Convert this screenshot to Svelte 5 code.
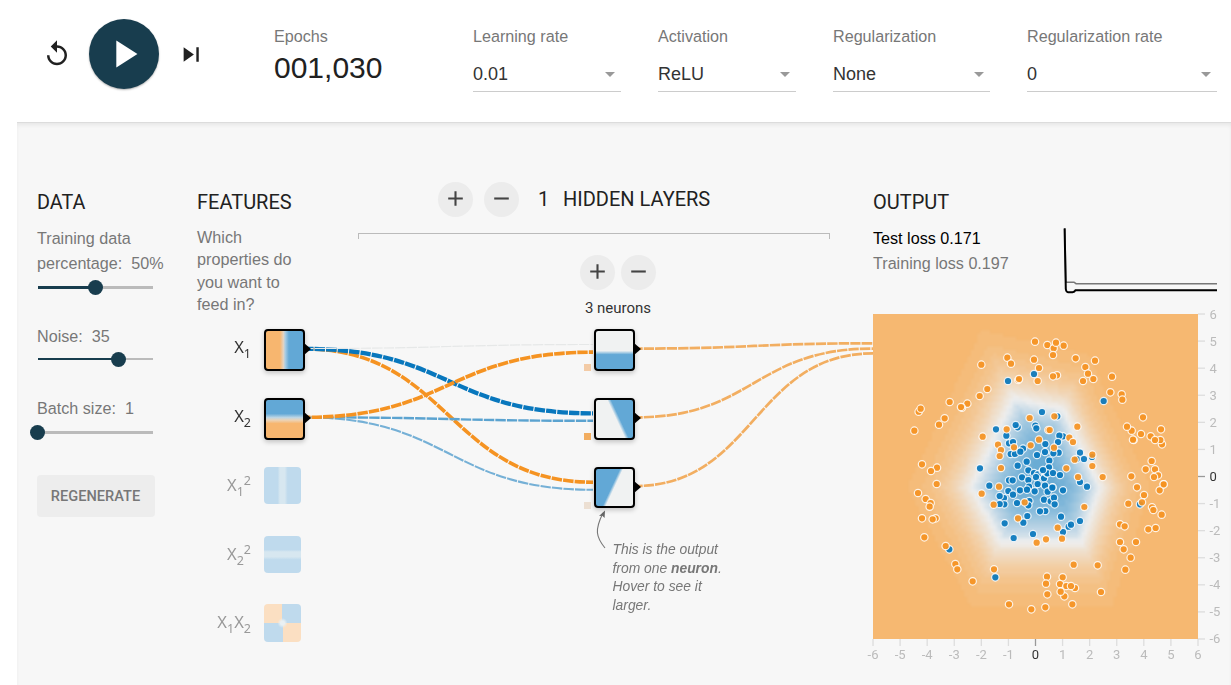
<script>
  const selects = [
    { label: 'Learning rate', value: '0.01', width: 148 },
    { label: 'Activation', value: 'ReLU', width: 138 },
    { label: 'Regularization', value: 'None', width: 157 },
    { label: 'Regularization rate', value: '0', width: 190 }
  ];

  const features = [
    { base: 'X', sub: '1', sup: '', kind: 'x1', top: 329, on: true },
    { base: 'X', sub: '2', sup: '', kind: 'x2', top: 398, on: true },
    { base: 'X', sub: '1', sup: '2', kind: 'x1sq', top: 467, on: false },
    { base: 'X', sub: '2', sup: '2', kind: 'x2sq', top: 536, on: false },
    { base: 'X', sub: '1', second: '2', kind: 'x1x2', top: 604, on: false }
  ];

  const neurons = [
    { kind: 'n1', top: 329, bias: 'rgba(240,160,85,.5)' },
    { kind: 'n2', top: 398, bias: '#f2ad60' },
    { kind: 'n3', top: 467, bias: '#ecdfd2' }
  ];

  const curve = (x0, y0, x1, y1) => {
    const m = (x0 + x1) / 2;
    return `M${x0},${y0}C${m},${y0} ${m},${y1} ${x1},${y1}`;
  };

  const links = [
    { d: curve(305, 349, 593, 482.2), color: '#f59322', w: 3.6, off: 2 },
    { d: curve(305, 348.8, 593, 413.4), color: '#0877bd', w: 4.3, off: 2 },
    { d: curve(305, 348.5, 593, 344.5), color: '#e6e8e8', w: 1.2, off: 2 },
    { d: curve(305, 417.3, 593, 489.8), color: '#75b0d6', w: 2.1, off: 5 },
    { d: curve(305, 417.3, 593, 420.8), color: '#5ba3d0', w: 2.4, off: 5 },
    { d: curve(305, 417.3, 593, 352.2), color: '#f59322', w: 3.7, off: 5 },
    { d: curve(635, 348.6, 873, 343.3), color: '#f2ae61', w: 2.7, off: 3 },
    { d: curve(635, 417.4, 873, 348.6), color: '#f2ae61', w: 2.7, off: 3 },
    { d: curve(635, 486, 873, 353.4), color: '#f2ae61', w: 2.7, off: 3 }
  ];

  // Sample groups in thirds of a pixel, each with its own offset inside the plot.
  const groups = [
    {
      dx: -24, dy: -27,
      blue: [[429,228],[507,207],[531,321],[393,373],[458,367],[452,360],[511,362],[514,370],[424,392],[432,415],[444,411],[541,417],[474,431],[437,447],[450,447],[466,440],[540,441],[516,450],[485,470],[458,482],[490,496],[345,490],[373,542],[471,517],[432,526],[443,526],[490,525],[507,504],[519,508],[513,516],[533,498],[537,520],[545,505],[518,537],[540,542],[492,545]],
      orange: [[510,110],[427,158],[438,176],[507,164],[522,189],[518,228],[349,179],[460,225],[462,222],[367,252],[344,273],[254,291],[307,296],[291,308],[288,306],[161,320],[167,311],[239,340],[222,359],[148,377],[353,395],[171,478],[216,488],[198,498],[215,537],[494,339],[425,373],[399,419],[408,435],[404,453],[408,489],[447,427],[497,421],[522,404],[402,545],[550,375]]
    },
    {
      dx: 501, dy: -27,
      blue: [[191,288],[52,334],[69,394],[58,392],[54,411],[56,443],[40,445],[120,443],[110,462],[132,462],[156,456],[28,467],[27,487],[22,505],[39,504],[60,510],[9,495],[120,531],[141,545],[38,547]],
      orange: [[22,120],[41,130],[48,113],[71,122],[39,150],[107,160],[165,167],[136,186],[144,206],[129,228],[160,222],[216,215],[51,211],[39,214],[211,262],[245,268],[247,284],[309,337],[275,377],[261,365],[303,387],[281,405],[279,404],[332,394],[366,418],[361,405],[345,405],[363,373],[335,468],[317,493],[345,493],[354,511],[342,516],[274,514],[188,516],[371,538],[291,547],[112,365],[29,375],[43,334],[42,428],[88,398],[99,411],[157,449],[104,464],[157,483],[79,490],[114,516]]
    },
    {
      dx: -24, dy: 498,
      blue: [[253,208],[391,292],[446,174],[504,162],[419,130],[475,128],[487,108],[417,54],[404,48],[418,73],[404,72],[430,33],[444,44],[456,69],[465,31],[486,29],[493,63],[490,76],[509,34],[548,35],[562,23],[537,59],[557,64],[567,53],[569,73],[594,31],[541,93],[525,94],[588,110],[645,123],[611,140],[618,134],[594,156],[825,73]],
      orange: [[159,39],[182,57],[197,69],[194,80],[171,115],[212,115],[203,118],[178,172],[242,198],[271,252],[277,268],[323,304],[387,268],[432,373],[499,388],[541,382],[546,290],[543,311],[547,343],[593,292],[585,312],[604,318],[630,324],[618,318],[598,349],[587,335],[622,373],[626,254],[698,256],[708,336],[781,269],[797,233],[776,208],[765,186],[813,186],[765,133],[779,139],[850,148],[872,144],[890,104],[861,82],[865,90],[837,45],[884,31],[896,13],[831,67],[790,71],[658,81],[350,41],[386,74],[479,67],[459,115],[578,143],[591,176],[543,178],[515,188]]
    }
  ];
  const place = (key) => groups.flatMap((g) => g[key].map(([x, y]) => [(x + g.dx) / 3, (y + g.dy) / 3]));
  const bluePoints = place('blue');
  const orangePoints = place('orange');

  const ticks = Array.from({ length: 13 }, (_, i) => i - 6);

  let heat;
  const relu = (v) => Math.max(0, v);
  const output = (x, y) =>
    Math.tanh(
      1.44 -
        0.79 * (relu(-0.9 * y - 0.35) + 1.12 * relu(x + 0.475 * y - 0.55) + 0.9 * relu(-x + 0.467 * y - 0.15))
    );

  $effect(() => {
    const ctx = heat.getContext('2d');
    const img = ctx.createImageData(100, 100);
    const neg = [245, 147, 34], mid = [232, 234, 235], pos = [8, 119, 189];
    for (let j = 0; j < 100; j++) {
      for (let i = 0; i < 100; i++) {
        let v = output(-6 + (12 * (i + 0.5)) / 100, 6 - (12 * (j + 0.5)) / 100);
        v = -1 + (2 * Math.min(29, Math.floor(((v + 1) / 2) * 30))) / 29;
        const end = v < 0 ? neg : pos;
        const t = Math.abs(v);
        const k = 4 * (j * 100 + i);
        for (let c = 0; c < 3; c++) img.data[k + c] = mid[c] + (end[c] - mid[c]) * t;
        img.data[k + 3] = 160;
      }
    }
    ctx.putImageData(img, 0, 0);
  });
</script>

{#snippet plus()}
  <svg viewBox="0 0 24 24" width="25" height="25"><path d="M19 13h-6v6h-2v-6H5v-2h6V5h2v6h6z" fill="#444" /></svg>
{/snippet}
{#snippet minus()}
  <svg viewBox="0 0 24 24" width="25" height="25"><path d="M19 13H5v-2h14z" fill="#444" /></svg>
{/snippet}

<div class="page">
  <header>
    <div class="controls">
      <button class="icon" aria-label="Reset">
        <svg viewBox="0 0 24 24" width="30" height="30"><path d="M12 5V1L7 6l5 5V7c3.31 0 6 2.69 6 6s-2.69 6-6 6-6-2.69-6-6H4c0 4.42 3.58 8 8 8s8-3.58 8-8-3.58-8-8-8z" fill="#212121" /></svg>
      </button>
      <button class="play" aria-label="Play">
        <svg viewBox="0 0 24 24" width="46" height="46"><path d="M8 5v14l11-7z" fill="#fff" /></svg>
      </button>
      <button class="icon step" aria-label="Step">
        <svg viewBox="0 0 24 24" width="29" height="29"><path d="M5.5 18l8.5-6-8.5-6v12zM16 6v12h2V6h-2z" fill="#212121" /></svg>
      </button>
    </div>
    <div class="epochs">
      <span class="label">Epochs</span>
      <span class="count">001,030</span>
    </div>
    <div class="selects">
      {#each selects as s}
        <div class="field" style="width: {s.width}px">
          <span class="label">{s.label}</span>
          <div class="value"><span>{s.value}</span><i></i></div>
        </div>
      {/each}
    </div>
  </header>

  <main>
    <section class="data">
      <h2>DATA</h2>
      <p class="cap">Training data<br />percentage:&nbsp; 50%</p>
      <div class="slider thick"><b style="width: 58px"></b><i></i></div>
      <p class="cap noise">Noise:&nbsp; 35</p>
      <div class="slider"><b style="width: 81px"></b><i></i></div>
      <p class="cap batch">Batch size:&nbsp; 1</p>
      <div class="slider thick"><b style="width: 0px"></b><i></i></div>
      <button class="regen">REGENERATE</button>
    </section>

    <section class="features">
      <h2>FEATURES</h2>
      <p>Which properties do you want to feed in?</p>
    </section>

    <section class="hidden">
      <div class="layers">
        <button class="round">{@render plus()}</button>
        <button class="round">{@render minus()}</button>
        <span class="n">1</span>
        <h2>HIDDEN LAYERS</h2>
      </div>
      <div class="bracket"></div>
      <div class="neuron-controls">
        <button class="round">{@render plus()}</button>
        <button class="round">{@render minus()}</button>
      </div>
      <div class="neuron-count">3 neurons</div>
    </section>

    <section class="output">
      <div class="summary">
        <div>
          <h2>OUTPUT</h2>
          <p class="test">Test loss 0.171</p>
          <p class="train">Training loss 0.197</p>
        </div>
        <svg class="chart" width="155" height="70" viewBox="0 0 155 70" fill="none">
          <path d="M2.8 3L3.8 56L4.5 57.2H12L14 58.7H155" stroke="#777" stroke-width="1.6" />
          <path d="M2.6 3.5L3.8 64Q4.2 67.2 6 67.2H10.5Q12.5 67 13.5 65.2H155" stroke="#000" stroke-width="2" />
        </svg>
      </div>
      <div class="plot">
        <canvas bind:this={heat} width="100" height="100"></canvas>
        <svg width="358" height="372" viewBox="0 0 358 372">
          {#each ticks as t}
            <line x1={162.5 + t * 27.08} x2={162.5 + t * 27.08} y1="325" y2="332" class:zero={t === 0} />
            <line x1="325" x2="332" y1={162.5 - t * 27.08} y2={162.5 - t * 27.08} class:zero={t === 0} />
            <text x={162.5 + t * 27.08} y="345" text-anchor="middle" class:zero={t === 0}>{t}</text>
            <text x="336.5" y={167 - t * 27.08} class:zero={t === 0}>{t}</text>
          {/each}
          {#each bluePoints as [x, y]}
            <circle cx={x} cy={y} r="3.7" fill="#0877bd" />
          {/each}
          {#each orangePoints as [x, y]}
            <circle cx={x} cy={y} r="3.7" fill="#f59322" />
          {/each}
        </svg>
      </div>
    </section>

    <div class="network">
      <svg class="links" width="1231" height="685" viewBox="0 0 1231 685" fill="none">
        {#each links as l}
          <path d={l.d} stroke={l.color} stroke-width={l.w} stroke-dasharray="10.4 1.1" stroke-dashoffset={l.off} />
        {/each}
        <path d="M605 548C596 537 594.5 530 603 513" stroke="#777" stroke-width="1.1" />
        <path d="M605 510.5L599 516L602.3 515.8L604.6 518Z" fill="#666" />
      </svg>
      {#each features as f}
        <div class="name" class:off={!f.on} style="top: {f.top - 1}px">
          {f.base}<sub>{f.sub}</sub>{#if f.second}{f.base}<sub>{f.second}</sub>{/if}{#if f.sup}<sup>{f.sup}</sup>{/if}
        </div>
        <div class="node feature {f.kind}" class:off={!f.on} style="top: {f.top}px"></div>
        {#if f.on}<div class="port" style="left: 304px; top: {f.top + 14}px"></div>{/if}
      {/each}
      {#each neurons as n}
        <div class="node neuron {n.kind}" style="top: {n.top}px"></div>
        <div class="port" style="left: 634px; top: {n.top + 14}px"></div>
        <div class="bias" style="top: {n.top + 35}px; background: {n.bias}"></div>
      {/each}
      <p class="callout">This is the output<br />from one <strong>neuron</strong>.<br />Hover to see it<br />larger.</p>
    </div>
  </main>
</div>

<style>
  :global(body) { background: #fff; overflow: hidden; }
  .page { position: relative; width: 1231px; height: 685px; overflow: hidden; font-family: "Liberation Sans", Arial, sans-serif; color: #222; display: flex; flex-direction: column; }
  h2, p { margin: 0; font-weight: 400; }
  button { border: 0; padding: 0; background: none; display: flex; align-items: center; justify-content: center; }
  header { height: 122px; flex: none; display: flex; box-sizing: border-box; }
  .controls { display: flex; align-items: center; height: 108px; padding-left: 42px; width: 232px; box-sizing: content-box; }
  .icon { width: 29px; height: 28px; }
  .icon svg { flex: none; }
  .step { margin-left: -1px; }
  .play { width: 70px; height: 70px; margin: 0 19px 0 18px; border-radius: 50%; background: #183d4e; box-shadow: 0 1px 2px rgba(0,0,0,.3); }
  .label { display: block; font-size: 16.15px; line-height: 20px; color: #777; white-space: nowrap; }
  .epochs { padding-top: 26px; width: 199px; }
  .count { display: block; font-size: 30px; line-height: 40px; margin-top: 2px; color: #212121; }
  .selects { display: flex; gap: 37px; padding-top: 26px; }
  .value { margin-top: 17px; height: 28px; border-bottom: 1px solid #ccc; display: flex; justify-content: space-between; font-size: 18px; line-height: 22px; color: #333; }
  .value i { margin: 9px 6px 0 0; width: 0; height: 0; border: 5px solid transparent; border-top-color: #999; border-bottom: 0; }

  main { flex: 1; margin-left: 17px; background: #f7f7f7; border-top: 1px solid #dcdcdc; box-shadow: inset 0 3px 4px -1px rgba(0,0,0,.07); display: grid; grid-template-columns: 160px 161px 515px 1fr; padding-left: 20px; }
  h2 { font: 400 20px/24px Roboto, sans-serif; color: #212121; white-space: nowrap; }
  section { min-width: 0; }
  .data, .features, .output { padding-top: 67px; }
  .data h2 { font-size: 19.8px; line-height: 26px; margin-bottom: -2px; }
  .cap { font-size: 16.15px; line-height: 25px; color: #777; margin-top: 12px; white-space: nowrap; }
  .slider { position: relative; width: 115px; height: 16px; margin: 3px 0 0 1px; display: flex; align-items: center; background: linear-gradient(#bbb, #bbb) 0 50% / 100% 2px no-repeat; }
  .slider.thick { background-size: 100% 3px; }
  .slider b { height: 2px; background: #183d4e; }
  .slider.thick b { height: 3px; }
  .slider i { width: 15px; height: 15px; margin-left: -8px; border-radius: 50%; background: #183d4e; }
  .cap + .slider { margin-top: 3px; }
  .cap.noise { margin-top: 29px; }
  .cap.batch { margin-top: 29px; }
  .noise + .slider { margin-top: 2px; }
  .batch + .slider { margin-top: 3px; }
  .regen { margin-top: 35px; width: 118px; height: 42px; border-radius: 4px; background: #ededed; color: #777; font: 500 14.6px Roboto, sans-serif; padding-right: 1px; }
  .features p { margin-top: 12px; width: 110px; font-size: 16.2px; line-height: 22.4px; color: #777; }

  .hidden { padding-top: 59px; }
  .layers { display: flex; align-items: center; padding-left: 80px; height: 35px; }
  .layers h2, .layers .n { margin-top: -2px; }
  .round { width: 35px; height: 35px; border-radius: 50%; background: #ececec; flex: none; }
  .round svg { margin: -2px 1px 0 0; flex: none; }
  .layers .round + .round { margin-left: 11px; }
  .layers .n { font: 400 20px/24px Roboto, sans-serif; margin-left: 19px; width: 25px; }
  .bracket { margin-top: 16px; width: 470px; height: 5px; border: 1px solid #bbb; border-bottom: 0; }
  .neuron-controls { display: flex; gap: 6px; padding: 16px 0 0 222px; }
  .neuron-count { width: 120px; margin: 8px 0 0 200px; text-align: center; font: 400 15px/20px Roboto, sans-serif; color: #333; }

  .summary { display: flex; justify-content: space-between; height: 124px; }
  .summary p { font-size: 16.15px; line-height: 25px; white-space: nowrap; }
  .summary h2 { line-height: 25px; margin-bottom: -1px; }
  .test { padding-top: 12px; color: #000; }
  .train { color: #777; }
  .chart { margin: 35px 14px 0 0; }
  .plot { position: relative; width: 358px; height: 372px; }
  .plot canvas, .plot svg { position: absolute; left: 0; top: 0; overflow: visible; }
  .plot canvas { width: 325px; height: 325px; }
  .plot circle { stroke: #fff; stroke-opacity: .85; stroke-width: 1.2; fill-opacity: .92; }
  .plot line { stroke: #ddd; stroke-width: 1.3; }
  .plot line.zero { stroke: #999; }
  .plot text { font: 13px Roboto, sans-serif; fill: #bbb; }
  .plot text.zero { fill: #333; }

  .network { position: absolute; inset: 0; pointer-events: none; }
  .links { position: absolute; left: 0; top: 0; }
  .name { position: absolute; left: 180px; width: 71px; height: 37px; text-align: right; font: 16.5px/37px "Noto Sans", sans-serif; color: #333; white-space: nowrap; }
  .name sub, .name sup { font-size: 12.5px; line-height: 0; }
  .name sub { vertical-align: -5px; }
  .name sup { vertical-align: 6px; }
  .name.off { color: #999; }
  .node { position: absolute; box-sizing: border-box; width: 41px; height: 42px; border: 2px solid #000; border-radius: 4px; background-origin: padding-box; box-shadow: 0 2px 5px rgba(0,0,0,.22); }
  .feature { left: 264px; }
  .neuron { left: 594px; }
  .neuron.n3 { height: 41px; }
  .node.off { width: 37px; height: 37px; border: 0; box-shadow: none; }
  .x1 { background: linear-gradient(90deg, #f7b66f 38%, #e3d3c2 47%, #a9cde4 52%, #62a8d6 62%); }
  .x2 { background: linear-gradient(180deg, #62a8d6 36%, #bcd5e4 46%, #ecd3b6 53%, #f7b66f 62%); }
  .x1sq { background: linear-gradient(90deg, #bfdaed 37%, #d7e7f0 43%, #d7e7f0 56%, #bfdaed 64%); }
  .x2sq { background: linear-gradient(180deg, #bfdaed 37%, #d7e7f0 43%, #d7e7f0 56%, #bfdaed 64%); }
  .node.x1x2 { height: 38px; background: radial-gradient(circle, #e9f0f3 2px, rgba(238,241,242,0) 5px), conic-gradient(#bfdaed 25%, #fbdfc2 0 50%, #bfdaed 0 75%, #fbdfc2 0); }
  .n1 { background: linear-gradient(180deg, #f0f2f2 52%, #62a8d6 62%); }
  .n2 { background: linear-gradient(65deg, #f0f2f2 53%, #62a8d6 60%); }
  .n3 { background: linear-gradient(115deg, #62a8d6 44%, #f0f2f2 50%); }
  .port { position: absolute; width: 7px; height: 12px; background: #000; clip-path: polygon(0 0, 100% 50%, 0 100%); }
  .bias { position: absolute; left: 584px; width: 7px; height: 7px; }
  .callout { position: absolute; left: 612.5px; top: 540px; font-size: 13.85px; line-height: 18.6px; font-style: italic; color: #777; white-space: nowrap; }
</style>
